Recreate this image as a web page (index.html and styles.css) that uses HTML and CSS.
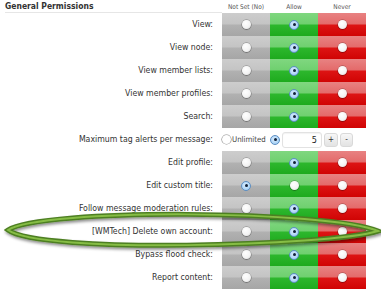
FILE: index.html
```html
<!DOCTYPE html>
<html>
<head>
<meta charset="utf-8">
<link rel="stylesheet" href="styles.css">
</head>
<body>
<div class="perms">
  <div class="head">
    <div class="title">General Permissions</div>
    <div class="colh">Not Set (No)</div>
    <div class="colh">Allow</div>
    <div class="colh">Never</div>
  </div>

  <div class="row"><div class="label">View:</div><div class="cell gray"><span class="radio"></span></div><div class="cell green"><span class="radio on"></span></div><div class="cell red"><span class="radio"></span></div></div>
  <div class="row"><div class="label">View node:</div><div class="cell gray"><span class="radio"></span></div><div class="cell green"><span class="radio on"></span></div><div class="cell red"><span class="radio"></span></div></div>
  <div class="row"><div class="label">View member lists:</div><div class="cell gray"><span class="radio"></span></div><div class="cell green"><span class="radio on"></span></div><div class="cell red"><span class="radio"></span></div></div>
  <div class="row"><div class="label">View member profiles:</div><div class="cell gray"><span class="radio"></span></div><div class="cell green"><span class="radio on"></span></div><div class="cell red"><span class="radio"></span></div></div>
  <div class="row"><div class="label">Search:</div><div class="cell gray"><span class="radio"></span></div><div class="cell green"><span class="radio on"></span></div><div class="cell red"><span class="radio"></span></div></div>

  <div class="row"><div class="label">Maximum tag alerts per message:</div>
    <div class="limit">
      <span class="radio small"></span><span class="unl">Unlimited</span>
      <span class="radio on small"></span>
      <span class="num">5</span>
      <span class="btn">+</span>
      <span class="btn minus">-</span>
    </div>
  </div>

  <div class="row"><div class="label">Edit profile:</div><div class="cell gray"><span class="radio"></span></div><div class="cell green"><span class="radio on"></span></div><div class="cell red"><span class="radio"></span></div></div>
  <div class="row"><div class="label">Edit custom title:</div><div class="cell gray"><span class="radio on"></span></div><div class="cell green"><span class="radio"></span></div><div class="cell red"><span class="radio"></span></div></div>
  <div class="row"><div class="label">Follow message moderation rules:</div><div class="cell gray"><span class="radio"></span></div><div class="cell green"><span class="radio on"></span></div><div class="cell red"><span class="radio"></span></div></div>
  <div class="row"><div class="label">[WMTech] Delete own account:</div><div class="cell gray"><span class="radio"></span></div><div class="cell green"><span class="radio on"></span></div><div class="cell red"><span class="radio"></span></div></div>
  <div class="row"><div class="label">Bypass flood check:</div><div class="cell gray"><span class="radio"></span></div><div class="cell green"><span class="radio on"></span></div><div class="cell red"><span class="radio"></span></div></div>
  <div class="row"><div class="label">Report content:</div><div class="cell gray"><span class="radio"></span></div><div class="cell green"><span class="radio on"></span></div><div class="cell red"><span class="radio"></span></div></div>
</div>

<svg class="mark" width="381" height="300" viewBox="0 0 381 300">
  <defs>
    <filter id="sh" x="-5%" y="-50%" width="110%" height="200%">
      <feDropShadow dx="1" dy="2" stdDeviation="1.4" flood-color="#000" flood-opacity="0.45"/>
    </filter>
  </defs>
  <path d="M8 230 C40 208 330 210 378 231 C330 246 40 254 8 230 Z" fill="none" stroke="#4d7f22" stroke-width="5" filter="url(#sh)"/>
  <path d="M8 230 C40 208 330 210 378 231 C330 246 40 254 8 230 Z" fill="none" stroke="#86bd45" stroke-width="2"/>
</svg>
</body>
</html>
```

FILE: styles.css
```css
html, body {
  margin: 0;
  padding: 0;
  background: #fff;
}
body {
  width: 381px;
  height: 300px;
  overflow: hidden;
  position: relative;
  font-family: "DejaVu Sans Condensed", "DejaVu Sans", sans-serif;
  color: #222;
}
.perms {
  display: flex;
  flex-direction: column;
}
.head {
  display: grid;
  grid-template-columns: 222px 48px 48px 48px;
  height: 13px;
  align-items: center;
}
.title {
  margin-left: 5px;
  font-weight: bold;
  font-size: 8.5px;
  color: #333;
  height: 13px;
  line-height: 12px;
  border-bottom: 1px solid #e6e6e6;
  box-sizing: border-box;
}
.colh {
  text-align: center;
  font-size: 6.5px;
  color: #555;
}
.row {
  display: grid;
  grid-template-columns: 213px 9px 48px 48px 48px;
  height: 23px;
}
.label {
  grid-column: 1;
  text-align: right;
  font-size: 8.7px;
  line-height: 23px;
  white-space: nowrap;
  color: #333;
}
.cell {
  display: flex;
  align-items: center;
  justify-content: center;
}
.row .cell:nth-child(2) { grid-column: 3; }
.gray {
  background: linear-gradient(#cdcdcd 0%, #c4c4c4 48%, #b1b1b1 52%, #a6a6a6 100%);
}
.green {
  background: linear-gradient(#80d780 0%, #6fd06f 48%, #2db72d 52%, #1eaa1e 100%);
}
.red {
  background: linear-gradient(#e88282 0%, #e46a6a 48%, #dd1414 52%, #d00404 100%);
}
.radio {
  width: 9px;
  height: 9px;
  border-radius: 50%;
  background: radial-gradient(circle at 40% 35%, #ffffff 0%, #f4f4f4 55%, #d6d6d6 100%);
  box-shadow: 0 0 0 0.5px rgba(0, 0, 0, 0.35), 0 1px 1px rgba(0, 0, 0, 0.2);
  display: flex;
  align-items: center;
  justify-content: center;
}
.radio.on {
  width: 8px;
  height: 8px;
  background: radial-gradient(circle at 45% 40%, #dbeeff 0%, #a9d2f5 70%, #7fb3e4 100%);
  border: 1px solid #5c8fc4;
  box-shadow: none;
}
.radio.on::after {
  content: "";
  width: 3px;
  height: 3px;
  border-radius: 50%;
  background: #11223a;
}
.limit {
  grid-column: 3 / span 3;
  display: flex;
  align-items: center;
}
.radio.small {
  flex: none;
  width: 9px;
  height: 9px;
  background: #fff;
  box-shadow: 0 0 0 0.6px rgba(0, 0, 0, 0.45);
}
.radio.on.small {
  width: 8px;
  height: 8px;
  background: radial-gradient(circle at 45% 40%, #dbeeff 0%, #a9d2f5 70%, #7fb3e4 100%);
  box-shadow: none;
}
.unl {
  flex: none;
  width: 39px;
  padding-left: 1px;
  box-sizing: border-box;
  font-size: 7.8px;
  color: #444;
}
.num {
  flex: none;
  margin-left: 2px;
  width: 40px;
  height: 16px;
  box-sizing: border-box;
  border: 1px solid #e2e2e2;
  border-radius: 3px;
  background: #fff;
  text-align: right;
  padding-right: 4px;
  font-size: 9px;
  line-height: 14px;
  color: #222;
  box-shadow: inset 0 1px 1px rgba(0, 0, 0, 0.05);
}
.btn {
  flex: none;
  margin-left: 2px;
  width: 14px;
  height: 14px;
  border-radius: 3px;
  background: linear-gradient(#f7f7f7, #e3e3e3);
  border: 1px solid #d9d9d9;
  box-sizing: border-box;
  font-size: 8px;
  line-height: 12px;
  text-align: center;
  color: #333;
}
.btn.minus {
  width: 13px;
}
.mark {
  position: absolute;
  left: 0;
  top: 0;
  pointer-events: none;
}
```
